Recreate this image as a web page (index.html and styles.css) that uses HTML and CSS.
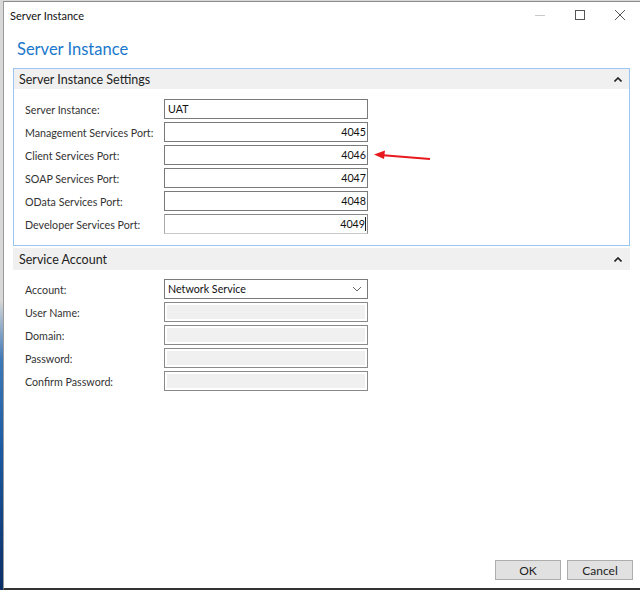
FILE: index.html
```html
<!DOCTYPE html>
<html>
<head>
<meta charset="utf-8">
<link rel="stylesheet" href="styles.css">
</head>
<body>
<div class="desk">
  <div class="window">
    <div class="titlebar">
      <span class="title">Server Instance</span>
      <div class="controls">
        <svg class="ctl" width="14" height="14" viewBox="0 0 14 14"><line x1="2" y1="7.5" x2="12" y2="7.5" stroke="#c8c8c8" stroke-width="1"/></svg>
        <svg class="ctl" width="14" height="14" viewBox="0 0 14 14"><rect x="2.5" y="2.5" width="9" height="9" fill="none" stroke="#555" stroke-width="1"/></svg>
        <svg class="ctl" width="14" height="14" viewBox="0 0 14 14"><path d="M2 2 L12 12 M12 2 L2 12" stroke="#555" stroke-width="1" fill="none"/></svg>
      </div>
    </div>
    <h1 class="heading">Server Instance</h1>

    <div class="section bordered">
      <div class="sec-head"><span>Server Instance Settings</span>
        <svg width="8" height="5" viewBox="0 0 8 5"><path d="M0.5 4.5 L4 1 L7.5 4.5" stroke="#222" stroke-width="1.6" fill="none"/></svg>
      </div>
      <div class="rows">
        <div class="row"><label>Server Instance:</label><div class="field">UAT</div></div>
        <div class="row"><label>Management Services Port:</label><div class="field num">4045</div></div>
        <div class="row"><label>Client Services Port:</label><div class="field num">4046</div></div>
        <div class="row"><label>SOAP Services Port:</label><div class="field num">4047</div></div>
        <div class="row"><label>OData Services Port:</label><div class="field num">4048</div></div>
        <div class="row"><label>Developer Services Port:</label><div class="field num focus">4049<span class="caret"></span></div></div>
      </div>
    </div>

    <div class="section second">
      <div class="sec-head tall"><span>Service Account</span>
        <svg width="8" height="5" viewBox="0 0 8 5"><path d="M0.5 4.5 L4 1 L7.5 4.5" stroke="#222" stroke-width="1.6" fill="none"/></svg>
      </div>
      <div class="rows rows2">
        <div class="row"><label>Account:</label><div class="field select">Network Service
          <svg width="10" height="6" viewBox="0 0 10 6"><path d="M1 1 L5 5 L9 1" stroke="#666" stroke-width="1" fill="none"/></svg></div></div>
        <div class="row"><label>User Name:</label><div class="field disabled"></div></div>
        <div class="row"><label>Domain:</label><div class="field disabled"></div></div>
        <div class="row"><label>Password:</label><div class="field disabled"></div></div>
        <div class="row"><label>Confirm Password:</label><div class="field disabled"></div></div>
      </div>
    </div>

    <div class="spacer"></div>
    <div class="buttons">
      <button class="btn">OK</button>
      <button class="btn">Cancel</button>
    </div>
  </div>
  <svg class="arrow" width="70" height="20" viewBox="0 0 70 20">
    <line x1="8" y1="6" x2="58" y2="10" stroke="#e8191c" stroke-width="2"/>
    <path d="M2 5.5 L13 1.5 L12 10 Z" fill="#e8191c"/>
  </svg>
</div>
</body>
</html>
```
FILE: styles.css
```css
* { box-sizing: border-box; }
html, body { margin: 0; padding: 0; }
body {
  width: 640px;
  height: 590px;
  overflow: hidden;
  font-family: "Lato", "Noto Sans", sans-serif;
  font-size: 10.7px;
  color: #333;
}
.desk {
  position: relative;
  width: 640px;
  height: 590px;
  padding-left: 3px;
  padding-top: 1px;
  background: linear-gradient(to bottom, #d8d8d8 0, #d8d8d8 300px, #3d78b8 360px, #1b5aa3 450px, #0b2e66 590px);
}
.window {
  height: 589px;
  background: #fff;
  border-left: 1px solid #9a9a9a;
  border-top: 1px solid #8c8c8c;
  border-bottom: 2px solid #333;
  display: flex;
  flex-direction: column;
}
.titlebar {
  height: 26px;
  display: flex;
  align-items: center;
  justify-content: space-between;
  padding-left: 6px;
}
.title { font-size: 11px; color: #111; white-space: nowrap; }
.controls { display: flex; align-items: center; height: 100%; gap: 26px; padding-right: 13px; }
.heading {
  margin: 10px 0 0 13px;
  font-size: 16.5px;
  font-weight: normal;
  color: #1a78cc;
  line-height: 22px;
  height: 30px;
}
.section {
  margin-left: 9px;
  width: 617px;
}
.bordered { border: 1px solid #9ac6f2; }
.sec-head {
  height: 20px;
  background: #f0f0f0;
  display: flex;
  align-items: center;
  justify-content: space-between;
  padding: 0 7px 0 5px;
  font-size: 12.5px;
  color: #222;
}
.sec-head.tall { height: 22px; padding-left: 6px; padding-right: 8px; }
.rows {
  display: flex;
  flex-direction: column;
  gap: 3px;
  padding: 10px 0 11px 11px;
}
.second { margin-top: 2px; }
.rows2 { padding-top: 9px; padding-left: 12px; }
.row { display: flex; align-items: center; height: 20px; }
.row label { width: 139px; flex: none; white-space: nowrap; }
.field {
  width: 204px;
  height: 20px;
  border: 1px solid #7a7a7a;
  padding: 0 3px;
  line-height: 18px;
  color: #111;
  position: relative;
}
.num { text-align: right; padding-right: 1px; }
.focus { border-color: #8b8b8b; border-left-color: #aaa; border-bottom-color: #c8c8c8; }
.caret { display: inline-block; width: 1px; height: 14px; background: #222; vertical-align: -3px; }
.select { display: flex; align-items: center; justify-content: space-between; padding-right: 5px; }
.disabled { background: #f0f0f0; border-color: #8a8a8a; box-shadow: inset 0 0 0 2px #fff; }
.spacer { flex: 1; }
.buttons {
  display: flex;
  justify-content: flex-end;
  gap: 6px;
  padding-right: 7px;
  margin-bottom: 8px;
}
.btn {
  width: 66px;
  height: 20px;
  background: #e1e1e1;
  border: 1px solid #adadad;
  font-family: "Lato", "Noto Sans", sans-serif;
  font-size: 12px;
  color: #222;
  padding: 0;
}
.arrow { position: absolute; left: 372px; top: 149px; }
```
